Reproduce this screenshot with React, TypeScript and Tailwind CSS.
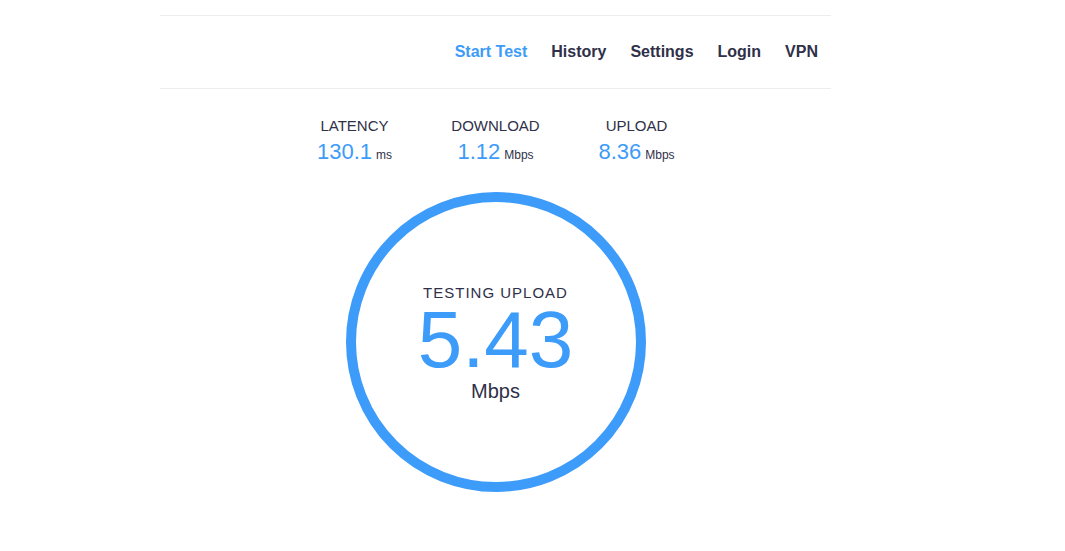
import * as React from "react";

const navLinks = [
  { label: "Start Test", active: true },
  { label: "History" },
  { label: "Settings" },
  { label: "Login" },
  { label: "VPN" },
];

const stats = [
  { label: "LATENCY", value: "130.1", unit: "ms" },
  { label: "DOWNLOAD", value: "1.12", unit: "Mbps" },
  { label: "UPLOAD", value: "8.36", unit: "Mbps" },
];

function Header() {
  return (
    <header className="mt-[15px] flex h-[74px] items-center justify-end border-y border-[#ededed] pr-[1px]">
      <nav className="flex items-center">
        {navLinks.map((link) => (
          <a
            key={link.label}
            href="#"
            className={
              "px-3 text-[16px] font-bold leading-[20px] " +
              (link.active ? "text-[#3d9bf9]" : "text-[#2f3049]")
            }
          >
            {link.label}
          </a>
        ))}
      </nav>
    </header>
  );
}

function Stats() {
  return (
    <div className="mx-auto mt-[28px] grid w-[423px] grid-cols-3">
      {stats.map((s) => (
        <div key={s.label} className="flex flex-col items-center">
          <span className="text-[15px] leading-[18px] text-[#2f3049]">{s.label}</span>
          <span className="mt-[4px] whitespace-nowrap leading-[26px]">
            <span className="text-[22px] text-[#3d9bf9]">{s.value}</span>
            <span className="ml-[4px] text-[12px] text-[#2f3049]">{s.unit}</span>
          </span>
        </div>
      ))}
    </div>
  );
}

function Gauge() {
  return (
    <div className="mx-auto mt-[24px] flex size-[300px] flex-col items-center justify-center rounded-full border-[10px] border-[#3d9bf9]">
      <div className="flex flex-col items-center pt-[3px]">
        <span className="text-[15px] leading-[16px] tracking-[1px] text-[#2f3049]">TESTING UPLOAD</span>
        <span className="text-[80px] leading-[78px] text-[#3d9bf9]">5.43</span>
        <span className="text-[20px] leading-[24px] text-[#2f3049]">Mbps</span>
      </div>
    </div>
  );
}

export default function App() {
  return (
    <div className="min-h-[551px] bg-white font-['Liberation_Sans',Arial,sans-serif]">
      <div className="ml-[160px] w-[671px]">
        <Header />
        <Stats />
        <Gauge />
      </div>
    </div>
  );
}
